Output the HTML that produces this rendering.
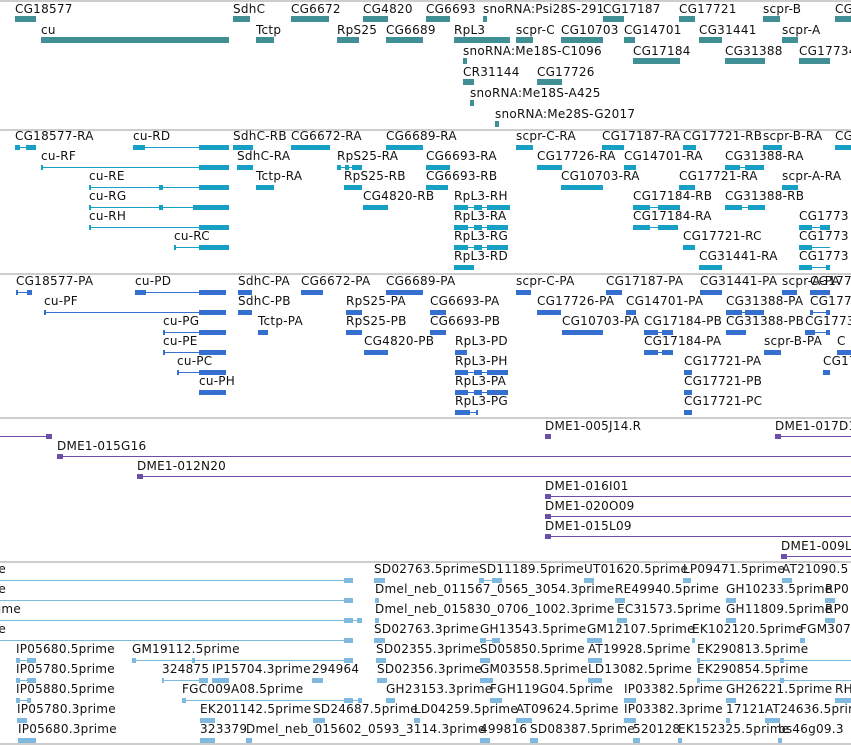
<!DOCTYPE html>
<html><head><meta charset="utf-8">
<style>
html,body{margin:0;padding:0;background:#fff;}
#c{position:relative;width:851px;height:745px;overflow:hidden;background:#fff;}
.l{position:absolute;font-family:"DejaVu Sans","Liberation Sans",sans-serif;font-size:12px;line-height:14px;white-space:nowrap;color:#111;letter-spacing:0.25px;}
.b{position:absolute;}
.s{position:absolute;left:0;width:851px;height:2px;background:#cdcdcd;}
</style></head><body><div id="c"></div>
<script>
var c=document.getElementById('c');
function el(cls,x,y,w,h,col,txt){var d=document.createElement('div');d.className=cls;d.style.left=x+'px';d.style.top=y+'px';if(w!=null)d.style.width=w+'px';if(h!=null)d.style.height=h+'px';if(col)d.style.background=col;if(txt!=null)d.textContent=txt;c.appendChild(d);}
[0,129,273,417,561,743].forEach(function(y){el('s',0,y,851,2,null);});
function lab(x,y,t,right){y+=1;if(right){var d=document.createElement('div');d.className='l';d.style.right=(851-x)+'px';d.style.top=y+'px';d.textContent=t;c.appendChild(d);}else el('l',x,y,null,null,null,t);}
var T1='#3f8f95';
var g1=[
[0,'CG18577',15,15,36],[0,'SdhC',233,233,250],[0,'CG6672',291,291,329],[0,'CG4820',363,363,388],[0,'CG6693',426,426,450],[0,'snoRNA:Psi28S-291',483,483,487],[0,'CG17187',603,603,624],[0,'CG17721',679,679,695],[0,'scpr-B',763,763,780],[0,'CG',835,835,851],
[1,'cu',41,41,229],[1,'Tctp',256,256,274],[1,'RpS25',337,337,359],[1,'CG6689',386,386,423],[1,'RpL3',454,454,510],[1,'scpr-C',516,516,533],[1,'CG10703',561,561,603],[1,'CG14701',624,624,635],[1,'CG31441',699,699,722],[1,'scpr-A',782,782,798],
[2,'snoRNA:Me18S-C1096',463,463,467],[2,'CG17184',633,633,680],[2,'CG31388',725,725,765],[2,'CG17734',799,799,830],
[3,'CR31144',463,463,474],[3,'CG17726',537,537,562],
[4,'snoRNA:Me18S-A425',470,470,474],[5,'snoRNA:Me28S-G2017',495,495,499]];
g1.forEach(function(g){var y=3+21*g[0];lab(g[2],y-2,g[1]);el('b',g[3],y+13,g[4]-g[3],6,T1);});
function tr(base,col,list,h){list.forEach(function(g){var y=base+20*g[0];lab(g[2],y-2,g[1]);var cy=y+17;
 if(g[3]!=null)el('b',g[3],cy,g[4]-g[3],1,col);
 (g[5]||[]).forEach(function(s){el('b',s[0],cy-Math.floor(h/2),s[1]-s[0],h,col);});});}
var T2='#17a0c6';
tr(130,T2,[
[0,'CG18577-RA',15,15,36,[[15,20],[26,36]]],[0,'cu-RD',133,133,229,[[133,145],[199,229]]],[0,'SdhC-RB',233,null,null,[[233,253]]],[0,'CG6672-RA',291,null,null,[[291,330]]],[0,'CG6689-RA',386,null,null,[[386,423]]],[0,'scpr-C-RA',516,null,null,[[516,533]]],[0,'CG17187-RA',602,null,null,[[602,624]]],[0,'CG17721-RB',683,null,null,[[683,696]]],[0,'scpr-B-RA',763,null,null,[[763,782]]],[0,'CG',835,null,null,[[835,851]]],
[1,'cu-RF',41,41,229,[[41,43],[199,229]]],[1,'SdhC-RA',237,null,null,[[237,253]]],[1,'RpS25-RA',337,337,362,[[337,341],[345,349],[352,362]]],[1,'CG6693-RA',426,null,null,[[426,450]]],[1,'CG17726-RA',537,null,null,[[537,562]]],[1,'CG14701-RA',624,null,null,[[624,636]]],[1,'CG31388-RA',725,725,764,[[725,740],[745,764]]],
[2,'cu-RE',89,89,229,[[89,91],[159,163],[199,229]]],[2,'Tctp-RA',256,null,null,[[256,274]]],[2,'RpS25-RB',344,null,null,[[344,362]]],[2,'CG6693-RB',426,null,null,[[426,448]]],[2,'CG10703-RA',561,561,603,[[561,603]]],[2,'CG17721-RA',679,null,null,[[679,695]]],[2,'scpr-A-RA',782,null,null,[[782,798]]],
[3,'cu-RG',89,89,229,[[89,91],[159,163],[193,229]]],[3,'CG4820-RB',363,null,null,[[363,388]]],[3,'RpL3-RH',454,454,510,[[454,468],[474,482],[487,510]]],[3,'CG17184-RB',633,633,680,[[633,650],[658,680]]],[3,'CG31388-RB',725,725,765,[[725,742],[748,765]]],
[4,'cu-RH',89,89,229,[[89,91],[199,229]]],[4,'RpL3-RA',454,454,508,[[454,468],[474,482],[487,508]]],[4,'CG17184-RA',633,633,678,[[633,650],[658,678]]],[4,'CG1773',799,799,830,[[799,812],[820,830]]],
[5,'cu-RC',174,174,229,[[174,176],[199,229]]],[5,'RpL3-RG',454,454,508,[[454,468],[474,482],[487,508]]],[5,'CG17721-RC',683,null,null,[[683,695]]],[5,'CG1773',799,799,830,[[799,812]]],
[6,'RpL3-RD',454,null,null,[[454,474]]],[6,'CG31441-RA',699,null,null,[[699,722]]],[6,'CG1773',799,799,830,[[799,812],[826,830]]]
],5);
var T3='#3570d0';
tr(275,T3,[
[0,'CG18577-PA',16,16,32,[[16,18],[27,32]]],[0,'cu-PD',135,135,226,[[135,146],[199,226]]],[0,'SdhC-PA',238,null,null,[[238,252]]],[0,'CG6672-PA',301,null,null,[[301,323]]],[0,'CG6689-PA',386,null,null,[[386,423]]],[0,'scpr-C-PA',516,null,null,[[516,531]]],[0,'CG17187-PA',606,null,null,[[606,622]]],[0,'CG31441-PA',700,null,null,[[700,722]]],[0,'scpr-A-PA',782,null,null,[[782,797]]],[0,'CG177',810,null,null,[[810,830]]],
[1,'cu-PF',44,44,226,[[44,46],[199,226]]],[1,'SdhC-PB',238,null,null,[[238,252]]],[1,'RpS25-PA',346,null,null,[[346,362]]],[1,'CG6693-PA',430,null,null,[[430,446]]],[1,'CG17726-PA',537,null,null,[[537,561]]],[1,'CG14701-PA',626,null,null,[[626,636]]],[1,'CG31388-PA',726,726,764,[[726,742],[745,764]]],[1,'CG177',810,810,830,[[810,813],[826,830]]],
[2,'cu-PG',163,163,226,[[163,165],[199,226]]],[2,'Tctp-PA',258,null,null,[[258,268]]],[2,'RpS25-PB',346,null,null,[[346,362]]],[2,'CG6693-PB',430,null,null,[[430,446]]],[2,'CG10703-PA',562,null,null,[[562,603]]],[2,'CG17184-PB',644,644,673,[[644,658],[662,673]]],[2,'CG31388-PB',726,null,null,[[726,746]]],[2,'CG1773',805,805,830,[[805,815],[826,830]]],
[3,'cu-PE',163,163,226,[[163,165],[199,226]]],[3,'CG4820-PB',364,null,null,[[364,388]]],[3,'RpL3-PD',455,null,null,[[455,467]]],[3,'CG17184-PA',644,644,673,[[644,658],[662,673]]],[3,'scpr-B-PA',764,null,null,[[764,781]]],[3,'C',837,null,null,[[837,851]]],
[4,'cu-PC',177,177,226,[[177,179],[199,226]]],[4,'RpL3-PH',455,455,508,[[455,468],[474,482],[487,508]]],[4,'CG17721-PA',684,null,null,[[684,692]]],[4,'CG17',823,null,null,[[823,830]]],
[5,'cu-PH',199,null,null,[[199,226]]],[5,'RpL3-PA',455,455,508,[[455,468],[474,482],[487,508]]],[5,'CG17721-PB',684,null,null,[[684,692]]],
[6,'RpL3-PG',455,455,478,[[455,470],[476,478]]],[6,'CG17721-PC',684,null,null,[[684,692]]]
],5);
var T4='#6b4fa8';
[[0,null,0,0,52],[0,'DME1-005J14.R',545,545,551],[0,'DME1-017D1',775,775,851],[1,'DME1-015G16',57,57,851],[2,'DME1-012N20',137,137,851],[3,'DME1-016I01',545,545,851],[4,'DME1-020O09',545,545,851],[5,'DME1-015L09',545,545,851],[6,'DME1-009L',781,781,851]].forEach(function(g){
 var y=420+20*g[0];if(g[1])lab(g[2],y-2,g[1]);var cy=y+16;el('b',g[3],cy,g[4]-g[3],1,T4);
 var mx=g[0]==0&&g[2]==0?46:g[3];el('b',mx,cy-2,6,5,T4);});
var T5='#80b9e0';
[0,1,2,3].forEach(function(r){var y=563+20*r;lab(r==2?21:6,y-2,r==2?'3prime':'5prime',true);el('b',0,y+17,r==2?362:353,1,T5);el('b',344,y+15,9,5,T5);if(r==2)el('b',357,y+15,5,5,T5);});
tr(563,T5,[
[0,'SD02763.5prime',374,null,null,[[374,385]]],[0,'SD11189.5prime',479,479,502,[[479,484],[492,502]]],[0,'UT01620.5prime',584,null,null,[[584,594]]],[0,'LP09471.5prime',683,null,null,[[683,691]]],[0,'AT21090.5',782,null,null,[[782,792]]],
[1,'Dmel_neb_011567_0565_3054.3prime',375,null,null,[[375,379]]],[1,'RE49940.5prime',615,null,null,[[615,625]]],[1,'GH10233.5prime',726,null,null,[[726,736]]],[1,'RP0',825,null,null,[[825,835]]],
[2,'Dmel_neb_015830_0706_1002.3prime',375,null,null,[[375,379]]],[2,'EC31573.5prime',617,null,null,[[617,627]]],[2,'GH11809.5prime',726,null,null,[[726,736]]],[2,'RP0',825,null,null,[[825,835]]],
[3,'SD02763.3prime',374,null,null,[[374,385]]],[3,'GH13543.5prime',480,480,500,[[480,486],[492,500]]],[3,'GM12107.5prime',587,null,null,[[587,602]]],[3,'EK102120.5prime',692,null,null,[[692,695]]],[3,'FGM307',800,null,null,[[800,805]]],
[4,'IP05680.5prime',16,16,36,[[16,20],[27,36]]],[4,'GM19112.5prime',132,132,353,[[132,136],[192,195],[344,353]]],[4,'SD02355.3prime',376,null,null,[[376,386]]],[4,'SD05850.5prime',480,null,null,[[480,490]]],[4,'AT19928.5prime',588,null,null,[[588,602]]],[4,'EK290813.5prime',697,697,851,[[697,700],[780,784]]],
[5,'IP05780.5prime',16,16,36,[[16,20],[27,36]]],[5,'324875',162,162,208,[[162,164],[199,208]]],[5,'IP15704.3prime',212,null,null,[[212,229]]],[5,'294964',312,null,null,[[312,323]]],[5,'SD02356.3prime',377,null,null,[[377,387]]],[5,'GM03558.5prime',480,null,null,[[480,493]]],[5,'LD13082.5prime',588,null,null,[[588,602]]],[5,'EK290854.5prime',697,697,851,[[697,700],[780,784]]],
[6,'IP05880.5prime',16,16,31,[[16,20],[27,31]]],[6,'FGC009A08.5prime',182,182,362,[[182,186],[344,353],[358,362]]],[6,'GH23153.3prime',386,null,null,[[386,395]]],[6,'FGH119G04.5prime',490,null,null,[[490,502]]],[6,'IP03382.5prime',624,null,null,[[624,636]]],[6,'GH26221.5prime',726,null,null,[[726,736]]],[6,'RH',835,null,null,[[835,851]]],
[7,'IP05780.3prime',17,null,null,[[17,27]]],[7,'EK201142.5prime',200,null,null,[[200,215]]],[7,'SD24687.5prime',313,null,null,[[313,325]]],[7,'LD04259.5prime',414,null,null,[[414,420]]],[7,'AT09624.5prime',516,null,null,[[516,532]]],[7,'IP03382.3prime',624,null,null,[[624,636]]],[7,'17121',726,null,null,[[726,730]]],[7,'AT24636.5prim',765,null,null,[[765,780]]],
[8,'IP05680.3prime',18,null,null,[[18,36]]],[8,'323379',200,null,null,[[200,215]]],[8,'Dmel_neb_015602_0593_3114.3prime',246,null,null,[[246,252]]],[8,'499816',480,null,null,[[480,490]]],[8,'SD08387.5prime',530,null,null,[[530,538]]],[8,'520128',633,null,null,[[633,640]]],[8,'EK152325.5prime',678,null,null,[[678,682]]],[8,'bs46g09.3',778,null,null,[[778,782]]]
],5);
</script></body></html>
